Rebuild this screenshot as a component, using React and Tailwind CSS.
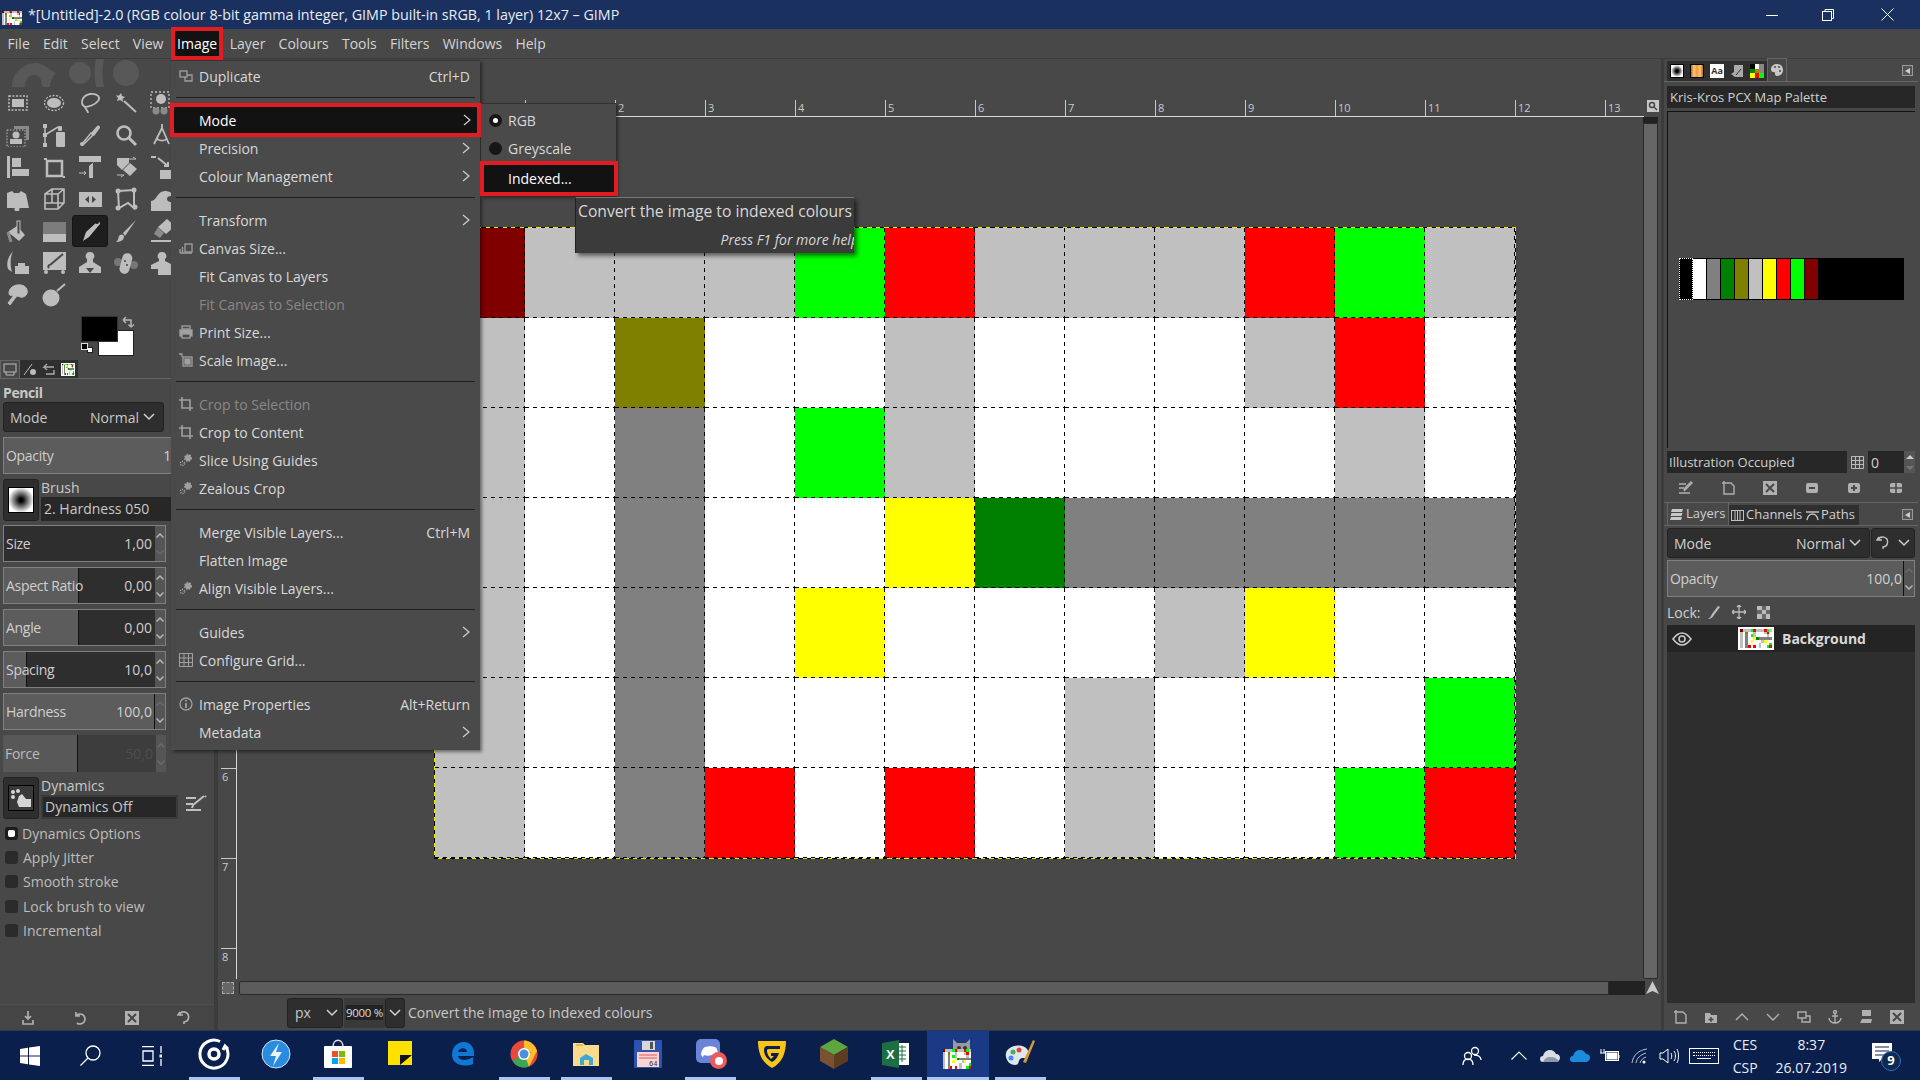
const C = '#bdbdbd'
const M = 'bg-[#800000]', S = 'bg-[#c0c0c0]', W = 'bg-white', O = 'bg-[#808000]', A = 'bg-[#808080]'
const L = 'bg-[#00ff00]', R = 'bg-[#ff0000]', Y = 'bg-[#ffff00]', G = 'bg-[#008000]'

const MAP = [
  [M, S, S, S, L, R, S, S, S, R, L, S],
  [S, W, O, W, W, S, W, W, W, S, R, W],
  [S, W, A, W, L, S, W, W, W, W, S, W],
  [S, W, A, W, W, Y, G, A, A, A, A, A],
  [S, W, A, W, Y, W, W, W, S, Y, W, W],
  [S, W, A, W, W, W, W, S, W, W, W, L],
  [S, W, A, R, W, R, W, S, W, W, L, R],
]

const TOOLS = [
  <><rect x="3" y="5" width="18" height="14" fill="none" stroke={C} strokeWidth="1.5" strokeDasharray="2 1.5" /><rect x="6" y="8" width="12" height="8" fill={C} /></>,
  <><ellipse cx="12" cy="12" rx="9.5" ry="7.5" fill="none" stroke={C} strokeWidth="1.3" strokeDasharray="2 1.5" /><ellipse cx="12" cy="12" rx="7" ry="5" fill={C} /></>,
  <path d="M7 16C2 13 3 5 12 3c7-1 11 3 8 7-3 4-10 6-13 6 0 2 3 3 3 6" fill="none" stroke={C} strokeWidth="1.8" />,
  <><path d="M7 2l1 3 3 1-2.500 2 .5 3-3-2-3 1 1-3-2-2.500h3z" fill={C} /><path d="M10 10l12 11" stroke={C} strokeWidth="2" /></>,
  <><rect x="1" y="1" width="18" height="16" fill="none" stroke={C} strokeWidth="1.300" strokeDasharray="2 2" /><circle cx="11" cy="8" r="5" fill={C} /><circle cx="6" cy="20" r="3.500" fill="#8a8a8a" /><circle cx="14" cy="20" r="3.500" fill="#8a8a8a" /></>,
  <><path d="M8 3h15v14h-3V6H8z" fill="#8a8a8a" /><rect x="1" y="7" width="18" height="17" fill="none" stroke={C} strokeDasharray="1.500 1.500" /><circle cx="10" cy="12" r="3.500" fill={C} /><rect x="4" y="16" width="12" height="5" fill={C} /></>,
  <><path d="M3 3v18M3 12L16 4" stroke={C} strokeWidth="1.500" fill="none" /><rect x="1" y="1" width="4" height="4" fill={C} /><rect x="1" y="10" width="4" height="4" fill={C} /><rect x="1" y="20" width="4" height="4" fill={C} /><rect x="14" y="9" width="9" height="15" rx="1" fill={C} /><rect x="16" y="3" width="4" height="5" rx="1" fill={C} /></>,
  <><path d="M4 21l9-11 2 2-10 10z" fill="none" stroke={C} strokeWidth="1.500" /><path d="M13 10l6-7c2-1 3 0 3 2l-6 8z" fill={C} /><circle cx="4" cy="21" r="2" fill={C} /></>,
  <><circle cx="10" cy="10" r="6.500" fill="none" stroke={C} strokeWidth="2.600" /><path d="M15 15l7 7" stroke={C} strokeWidth="3" /></>,
  <path d="M12 1v4M12 5L4 21M12 5l7 16M7 16c3 2 7 2 10 0" fill="none" stroke={C} strokeWidth="1.800" />,
  <><rect x="1" y="1" width="3" height="22" fill={C} /><rect x="6" y="3" width="9" height="9" fill={C} /><rect x="6" y="14" width="17" height="7" fill={C} /></>,
  <><path d="M5 6h15v15H5z" fill="none" stroke={C} strokeWidth="2.500" /><rect x="2" y="3" width="3" height="2" fill={C} /><rect x="21" y="21" width="2" height="2" fill={C} /></>,
  <><path d="M1 1h22v6h-8v16h-4V11l5-4H1z" fill={C} /><path d="M1 18h7l-2-2M8 18l-2 2" stroke={C} fill="none" /></>,
  <><path d="M3 3h12v5l-7 7-5-5z" fill={C} /><path d="M9 15l7-7 7 6-7 7z" fill={C} /><path d="M15 4h7l-3-2M3 20h7l-3 2" stroke={C} fill="none" /></>,
  <><path d="M1 2h5M8 3l10 8M18 7v4h-4" stroke={C} strokeWidth="2" fill="none" /><rect x="10" y="15" width="14" height="9" fill={C} /></>,
  <><path d="M1 6l5-2 2 2 5 0 2-2 5 3 3 14H1z" fill={C} /><circle cx="11" cy="22" r="2.500" fill={C} /></>,
  <path d="M3 7l7-5h12v14l-6 6H3zM3 7h13v15M16 7l6-5M10 2v14H3M10 16l12 0" fill="none" stroke={C} strokeWidth="1.600" />,
  <><rect x="1" y="5" width="23" height="15" fill={C} /><path d="M11 9l-4 3.500 4 3.500zM14 9l4 3.500-4 3.500z" fill="#484848" /></>,
  <><path d="M4 4l16-1 0 18-6-5-9 5z" fill="none" stroke={C} strokeWidth="2" /><circle cx="4" cy="4" r="2.500" fill={C} /><circle cx="20" cy="3" r="2.500" fill={C} /><circle cx="21" cy="20" r="2.500" fill={C} /><circle cx="4" cy="21" r="2.500" fill={C} /></>,
  <path d="M1 24V14c6 0 6-10 14-10 4 0 8 2 9 6-3-2-7-1-7 2 0 4 7 3 7 3v9z" fill={C} />,
  <><path d="M2 13l9-6 8 9-6 6z" fill={C} /><path d="M2 13l3 10" stroke="#8a8a8a" strokeWidth="3" /><rect x="11" y="2" width="3" height="13" fill="#484848" stroke={C} /></>,
  <><rect x="1" y="3" width="23" height="12" fill={C} opacity=".45" /><rect x="1" y="15" width="23" height="8" fill={C} /></>,
  <><path d="M5 22l3-9L19 3c2-1 3 0 3 2L11 18z" fill={C} /><circle cx="19" cy="3" r="2" fill="#1c1c1c" /></>,
  <><path d="M22 1L9 14l2 3z" fill={C} /><path d="M2 23c4 0 8-2 8-5 0-3-3-3-4-2-2 1-1 5-4 7z" fill={C} /></>,
  <><path d="M8 8l9-8 8 7-9 8z" fill={C} /><path d="M4 15l4-7 6 6-4 5z" fill="#8a8a8a" /><rect x="1" y="21" width="22" height="2" fill={C} /></>,
  <><path d="M7 0C2 6 0 12 2 18l4 3C4 14 4 6 7 0z" fill={C} /><path d="M12 12h7v3h4v8H9v-8h3z" fill={C} /></>,
  <><path d="M1 1h23v18H1z" fill={C} /><path d="M8 14L21 3M8 14c-2 0-2 2-1 3" stroke="#484848" strokeWidth="2" fill="none" /><circle cx="4" cy="21" r="2" fill={C} /><circle cx="21" cy="21" r="2" fill={C} /></>,
  <path d="M12 1a4 4 0 0 1 3 7v3l8 5v6H1v-6l8-5V8a4 4 0 0 1 3-7zM8 17l4 5 4-5z" fill={C} fillRule="evenodd" />,
  <><circle cx="4" cy="11" r="4" fill="#777" /><circle cx="20" cy="14" r="4" fill="#777" /><rect x="7" y="2" width="10" height="21" rx="5" transform="rotate(15 12 12)" fill={C} /><circle cx="11" cy="10" r="1" fill="#484848" /><circle cx="13" cy="14" r="1" fill="#484848" /></>,
  <><path d="M12 1a4 4 0 0 1 3 7v2l8 4v4H1v-4l8-4V8a4 4 0 0 1 3-7z" fill={C} /><rect x="8" y="16" width="16" height="8" fill={C} /></>,
  <path d="M3 10C3 3 12 0 18 3c5 3 4 10-1 11-3 1-5-2-7 0l-6 8-2-2 6-8C6 13 3 13 3 10zM10 8c3-2 7 0 6 3" fill={C} stroke={C} />,
  <><circle cx="9" cy="15" r="8.500" fill={C} /><path d="M15 8l8-7" stroke={C} strokeWidth="2" /></>,
]

const MENU = [
  { label: 'Duplicate', key: 'Ctrl+D', icon: 'dup' },
  'sep',
  { label: 'Mode', sub: true, hot: true },
  { label: 'Precision', sub: true },
  { label: 'Colour Management', sub: true },
  'sep',
  { label: 'Transform', sub: true },
  { label: 'Canvas Size...', icon: 'size' },
  { label: 'Fit Canvas to Layers' },
  { label: 'Fit Canvas to Selection', off: true },
  { label: 'Print Size...', icon: 'print' },
  { label: 'Scale Image...', icon: 'scale' },
  'sep',
  { label: 'Crop to Selection', off: true, icon: 'crop' },
  { label: 'Crop to Content', icon: 'crop' },
  { label: 'Slice Using Guides', icon: 'gear' },
  { label: 'Zealous Crop', icon: 'gear' },
  'sep',
  { label: 'Merge Visible Layers...', key: 'Ctrl+M' },
  { label: 'Flatten Image' },
  { label: 'Align Visible Layers...', icon: 'gear' },
  'sep',
  { label: 'Guides', sub: true },
  { label: 'Configure Grid...', icon: 'grid' },
  'sep',
  { label: 'Image Properties', key: 'Alt+Return', icon: 'info' },
  { label: 'Metadata', sub: true },
]

function MenuIcon({ name }) {
  const c = '#a0a0a0'
  return (
    <svg width="14" height="14" viewBox="0 0 14 14" fill="none" stroke={c} strokeWidth="1.300">
      {name === 'dup' && <><rect x="1" y="2" width="7" height="6" /><path d="M8 6h5v6H6V8" /></>}
      {name === 'size' && <><rect x="6" y="3" width="7" height="8" /><path d="M1 8v4M3.500 6v6M1 12h12" /></>}
      {name === 'print' && <><rect x="1" y="5" width="12" height="6" fill={c} /><rect x="3" y="1" width="8" height="3" /><rect x="3" y="9" width="8" height="4" fill="#4a4a4a" /></>}
      {name === 'scale' && <><rect x="4" y="4" width="9" height="9" /><rect x="6" y="6" width="5" height="5" fill={c} /><path d="M0 1h3v3" /></>}
      {name === 'crop' && <path d="M3 0v11h11M0 3h11v11" strokeWidth="1.600" />}
      {name === 'gear' && <><circle cx="9" cy="5" r="3" fill={c} strokeDasharray="1.500 1" strokeWidth="2" /><circle cx="3.500" cy="10.500" r="2" strokeDasharray="1 1" strokeWidth="1.600" /></>}
      {name === 'grid' && <path d="M.5.5h13v13H.5zM.5 5h13M.5 9.500h13M5 .5v13M9.500.5v13" strokeWidth="1" />}
      {name === 'info' && <><circle cx="7" cy="7" r="6" /><path d="M7 6v5M7 3v1.500" strokeWidth="1.800" /></>}
    </svg>
  )
}

function Chevron({ className = '' }) {
  return (
    <svg className={className} width="8" height="12" viewBox="0 0 8 12" fill="none" stroke="#d0d0d0" strokeWidth="1.200">
      <path d="M1 1l6 5-6 5" />
    </svg>
  )
}

function Caret({ className = '' }) {
  return (
    <svg className={className} width="12" height="8" viewBox="0 0 12 8" fill="none" stroke="#d0d0d0" strokeWidth="1.500">
      <path d="M1 1l5 5 5-5" />
    </svg>
  )
}

function ImageMenu() {
  return (
    <div className="absolute left-[171px] top-[60px] z-20 w-[309px] border-t border-[#333] bg-[#4a4a4a] pt-[1px] pb-[4px] text-[#d8d8d8] shadow-[2px_2px_3px_rgba(0,0,0,0.45)]">
      {MENU.map((m, i) => {
        if (m === 'sep') {
          return <div key={i} className="h-[16px] pt-[7px] pl-[5px] pr-[5px]"><div className="h-px bg-[#1f1f1f]" /></div>
        }
        return (
          <div
            key={i}
            className={m.hot
              ? 'relative z-10 -mx-px -my-[3px] flex h-[34px] items-center border-4 border-[#e31b23] bg-[#121212] pr-[6px] text-white'
              : 'flex h-[28px] items-center pr-[10px]'}
          >
            <div className={m.hot ? 'flex w-[25px] justify-center' : 'flex w-[28px] justify-center pl-[2px]'}>{m.icon ? <MenuIcon name={m.icon} /> : null}</div>
            <div className={m.off ? 'flex-1 text-[#888]' : 'flex-1'}>{m.label}</div>
            {m.key ? <div>{m.key}</div> : null}
            {m.sub ? <Chevron /> : null}
          </div>
        )
      })}
    </div>
  )
}

function ModeMenu() {
  return (
    <div className="absolute left-[481px] top-[103px] z-30 w-[135px] border-t border-[#333] bg-[#4a4a4a] pt-[2px] text-[#d8d8d8] shadow-[2px_2px_3px_rgba(0,0,0,0.45)]">
      <div className="flex h-[28px] items-center"><div className="ml-[8px] mr-[6px] flex h-[13px] w-[13px] items-center justify-center rounded-full bg-[#161616]"><div className="h-[5px] w-[5px] rounded-full bg-white" /></div>RGB</div>
      <div className="flex h-[28px] items-center"><div className="ml-[8px] mr-[6px] h-[13px] w-[13px] rounded-full bg-[#161616]" />Greyscale</div>
      <div className="-mx-px -mt-[1px] flex h-[35px] w-[138px] items-center border-4 border-[#e31b23] bg-[#121212] pl-[24px] text-white">Indexed...</div>
    </div>
  )
}

function Tip() {
  return (
    <div className="absolute left-[575px] top-[197px] z-40 h-[56px] w-[279px] overflow-hidden border-t border-[#777] border-l border-l-[#222] bg-[#3b3b3b] text-[#d8d8d8] shadow-[3px_3px_4px_rgba(0,0,0,0.5)]">
      <div className="pl-[2px] pt-[3px] text-[15.700px] leading-[21px] whitespace-nowrap">Convert the image to indexed colours</div>
      <div className="mt-[9px] flex justify-end whitespace-nowrap text-[14px] italic leading-[18px] -mr-[5px]">Press F1 for more help</div>
    </div>
  )
}

function Spinner({ dim }) {
  return (
    <div className="flex w-[10px] flex-col items-center justify-center gap-[4px] bg-[#555] h-full">
      <svg width="8" height="5" viewBox="0 0 8 5" fill="none" stroke={dim === 'up' || dim === 'both' ? '#6a6a6a' : '#b5b5b5'} strokeWidth="1.500"><path d="M.5 4.500L4 1l3.500 3.500" /></svg>
      <svg className="mt-[8px]" width="8" height="5" viewBox="0 0 8 5" fill="none" stroke={dim === 'down' || dim === 'both' ? '#6a6a6a' : '#b5b5b5'} strokeWidth="1.500"><path d="M.5.5L4 4 7.500.5" /></svg>
    </div>
  )
}

function Slider({ label, value, fill, dim, off }) {
  return (
    <div className={off
      ? 'relative flex h-[37px] w-[163px] items-center justify-between bg-[#3d3d3d] text-[#bbb]'
      : 'relative flex h-[37px] w-[163px] items-center justify-between border border-[#808080] bg-[#2e2e2e] text-[#cfcfcf]'}>
      <div className={`absolute inset-y-0 left-0 border-r border-[#111] ${off ? 'bg-[#585858]' : 'bg-[#5c5c5c]'} ${fill}`} />
      <div className="relative pl-[2px] text-[14px] tracking-[-0.3px]">{label}</div>
      <div className="relative flex h-full items-center gap-[3px]">
        <span className={off ? 'text-[#4d4d4d]' : ''}>{value}</span>
        <Spinner dim={dim} />
      </div>
    </div>
  )
}

function MiniMap({ className }) {
  return (
    <div className={`grid grid-cols-12 ${className}`}>
      {MAP.flat().map((c, i) => <div key={i} className={c} />)}
    </div>
  )
}

function LeftDock() {
  const opts = ['Apply Jitter', 'Smooth stroke', 'Lock brush to view', 'Incremental']
  return (
    <div className="flex w-[214px] shrink-0 flex-col bg-[#484848]">
      <div className="h-[28px] overflow-hidden pl-[12px]">
        <svg width="150" height="28" viewBox="0 0 150 28" fill="#585858"><path d="M0 28c0-16 14-24 24-24 8 0 14 8 20 10-4 4-6 9-6 14h-8c0-8-3-12-8-12s-9 4-9 12z" /><circle cx="68" cy="14" r="11" /><circle cx="114" cy="14" r="13" /><path d="M84 0c-2 10-2 18 0 28h8c-2-10-2-18 0-28z" /></svg>
      </div>
      <div className="grid w-[180px] grid-cols-[repeat(5,36px)] auto-rows-[32px]">
        {TOOLS.map((t, i) => (
          <div key={i} className={i === 22 ? 'flex items-center justify-center rounded-[3px] border border-[#151515] bg-[#1e1e1e]' : 'flex items-center justify-center'}>
            <svg width="24" height="24" viewBox="0 0 24 24">{t}</svg>
          </div>
        ))}
      </div>
      <div className="relative h-[50px] shrink-0">
        <div className="absolute left-[98px] top-[19px] h-[26px] w-[36px] border border-[#222] bg-white" />
        <div className="absolute left-[81px] top-[5px] h-[26px] w-[37px] border border-[#333] bg-black" />
        <svg className="absolute left-[122px] top-[5px]" width="13" height="13" viewBox="0 0 13 13" fill="none" stroke="#b5b5b5" strokeWidth="1.500"><path d="M1 4h8v7M1 4l3-3M1 4l3 3M9 11l-2.500-2.500M9 11l3-2.500" /></svg>
        <div className="absolute left-[87px] top-[36px] h-[6px] w-[6px] border border-[#222] bg-white" />
        <div className="absolute left-[81px] top-[32px] h-[7px] w-[7px] border border-[#ddd] bg-black" />
      </div>
      <div className="flex h-[18px] shrink-0 items-end border-b border-[#666]">
        <div className="flex h-[18px] w-[20px] items-center justify-center border border-b-0 border-[#666]"><svg width="14" height="13" viewBox="0 0 14 13" fill="none" stroke="#bbb"><rect x="1" y="1" width="12" height="8" /><path d="M3 12h8M3 9v3M11 9v3" /></svg></div>
        <div className="flex h-[18px] w-[19px] items-center justify-center bg-[#2f2f2f]"><svg width="14" height="13" viewBox="0 0 14 13" fill="#bbb"><circle cx="10" cy="9" r="3" /><path d="M1 12L9 1" stroke="#bbb" /></svg></div>
        <div className="flex h-[18px] w-[19px] items-center justify-center bg-[#2f2f2f]"><svg width="14" height="13" viewBox="0 0 14 13" fill="none" stroke="#aaa" strokeWidth="1.400"><path d="M12 4H2l3-3M2 4l3 3M4 11h8V7" /></svg></div>
        <div className="flex h-[18px] w-[20px] items-center justify-center bg-[#2f2f2f]"><MiniMap className="h-[13px] w-[14px] border border-white" /></div>
      </div>
      <div className="flex h-[23px] shrink-0 items-center pl-[3px] pt-[4px] text-[14px] font-bold text-[#c8c8c8] tracking-[-0.4px]">Pencil</div>
      <div className="flex flex-col px-[3px]">
        <div className="flex h-[30px] w-[161px] items-center rounded-[3px] border border-[#222] bg-[#2e2e2e] pl-[6px] pr-[8px] text-[#c8c8c8]">
          <span className="flex-1">Mode</span><span className="mr-[4px]">Normal</span><Caret />
        </div>
        <div className="mt-[5px] flex h-[37px] w-[205px] items-center justify-between border border-[#808080] bg-[#5c5c5c] text-[#cfcfcf]">
          <span className="pl-[2px] tracking-[-0.3px]">Opacity</span><span className="pr-[8px]">100,0</span>
        </div>
        <div className="mt-[5px] flex h-[42px]">
          <div className="flex h-[42px] w-[36px] shrink-0 items-center justify-center rounded-[3px] border border-[#222] bg-[#2e2e2e]">
            <div className="h-[26px] w-[26px] border border-black bg-[radial-gradient(circle,#000_10%,#fff_75%)]" />
          </div>
          <div className="ml-[2px] flex flex-col text-[#c8c8c8]">
            <div className="h-[18px] leading-[18px]">Brush</div>
            <div className="h-[24px] w-[180px] bg-[#272727] pl-[3px] leading-[24px]">2. Hardness 050</div>
          </div>
        </div>
        <div className="mt-[4px] flex flex-col gap-[5px]">
          <Slider label="Size" value="1,00" fill="w-0 border-r-0" dim="down" />
          <Slider label="Aspect Ratio" value="0,00" fill="w-[75px]" />
          <Slider label="Angle" value="0,00" fill="w-[75px]" />
          <Slider label="Spacing" value="10,0" fill="w-[23px]" />
          <Slider label="Hardness" value="100,0" fill="w-[151px]" dim="up" />
          <Slider label="Force" value="50,0" fill="w-[75px]" dim="both" off />
        </div>
        <div className="mt-[5px] flex h-[42px]">
          <div className="flex h-[42px] w-[36px] shrink-0 items-center justify-center rounded-[3px] border border-[#222] bg-[#2e2e2e]">
            <div className="flex h-[26px] w-[26px] items-center justify-center border border-black bg-[#3a3a3a]">
              <svg width="22" height="20" viewBox="0 0 22 20" fill="#d5d5d5"><circle cx="3" cy="4" r="2" /><circle cx="8" cy="3" r="2" /><circle cx="3" cy="9" r="2" /><path d="M9 8l3-2 4 5h5v8H9l-2-5z" /></svg>
            </div>
          </div>
          <div className="ml-[2px] flex flex-col text-[#c8c8c8]">
            <div className="h-[18px] leading-[18px]">Dynamics</div>
            <div className="h-[24px] w-[137px] border-2 border-[#3a3a3a] bg-[#272727] pl-[2px] leading-[20px]">Dynamics Off</div>
          </div>
          <svg className="ml-[8px] mt-[18px]" width="21" height="20" viewBox="0 0 21 20" fill="none" stroke="#c0c0c0" strokeWidth="2"><path d="M0 3h10M0 9h7M0 15h15M6 13l1-3L18 1M19 1l1 1" /></svg>
        </div>
        <div className="mt-[2px] flex flex-col text-[#bdbdbd]">
          <div className="flex h-[24px] items-center gap-[4px] pl-[2px]">
            <div className="flex h-[13px] w-[13px] items-center justify-center rounded-[3px] bg-[#1c1c1c]"><div className="h-[7px] w-[7px] rounded-[2px] bg-white" /></div>
            Dynamics Options
          </div>
          {opts.map((o) => (
            <div key={o} className="flex h-[24.500px] items-center gap-[5px] pl-[2px]">
              <div className="h-[13px] w-[13px] rounded-[3px] bg-[#2a2a2a]" />{o}
            </div>
          ))}
        </div>
      </div>
      <div className="flex-1" />
      <div className="flex h-[26px] shrink-0 items-center border-t border-[#4f4f4f] bg-[#454545]">
        {['save', 'undo', 'del', 'reset'].map((k) => (
          <div key={k} className="flex w-[52px] justify-center pl-[4px]">
            <svg width="14" height="14" viewBox="0 0 14 14" fill="none" stroke="#b0b0b0" strokeWidth="1.700">
              {k === 'save' && <path d="M7 0v8M4 5l3 3 3-3M2 9v4h10V9" />}
              {k === 'undo' && <path d="M3 1v4h4M3 5a5 5 0 1 1 1 7" />}
              {k === 'del' && <><rect x="0" y="0" width="14" height="14" fill="#b0b0b0" stroke="none" /><path d="M3 3l8 8M11 3l-8 8" stroke="#454545" strokeWidth="2" /></>}
              {k === 'reset' && <path d="M3 1L1 4h5M2 4a5 5 0 1 1 5 7v2" />}
            </svg>
          </div>
        ))}
      </div>
    </div>
  )
}

// dashed grid lines on the right and bottom edge of every cell, 4px on and 4px off
const CELL_LINES = "bg-[image:linear-gradient(90deg,#000_50%,transparent_50%),linear-gradient(#000_50%,transparent_50%)] bg-[length:8px_1px,1px_8px] bg-[position:0_100%,100%_0] [background-repeat:repeat-x,repeat-y]"

function Canvas() {
  const topTicks = [-2, -1, 0, 1, 2, 3, 4, 5, 6, 7, 8, 9, 10, 11, 12, 13]
  const sideTicks = [-1, 0, 1, 2, 3, 4, 5, 6, 7, 8]
  return (
    <div className="flex min-w-0 flex-1 flex-col border-l-[4px] border-r-[3px] border-[#3c3c3c] bg-[#484848]">
      <div className="h-[37px] shrink-0" />
      <div className="flex h-[21px] shrink-0">
        <div className="w-[19px] shrink-0" />
        <div className="flex flex-1 overflow-hidden border-b border-[#d8d8d8] pl-[18px] text-[11px] leading-[18px] text-[#c8c8c8]">
          {topTicks.map((t) => (
            <div key={t} className="h-[16px] mt-[4px] w-[90px] shrink-0 border-l border-[#c8c8c8] pl-[2px] leading-[15px]">{t}</div>
          ))}
        </div>
        <div className="flex w-[17px] shrink-0 items-center justify-center pb-[2px]">
          <div className="flex h-[12px] w-[12px] items-center justify-center bg-[#c8c8c8]">
            <svg width="10" height="10" viewBox="0 0 10 10" fill="none" stroke="#484848" strokeWidth="1.500"><circle cx="4" cy="4" r="2.500" /><path d="M6 6l3 3" /></svg>
          </div>
        </div>
      </div>
      <div className="flex min-h-0 flex-1">
        <div className="w-[19px] shrink-0 overflow-hidden border-r border-[#d8d8d8] pt-[21px] pb-[5px] text-[11px] leading-[15px] text-[#c8c8c8]">
          {sideTicks.map((t) => (
            <div key={t} className="ml-[3px] h-[90px] border-t border-[#c8c8c8] pl-[1px]">{t}</div>
          ))}
        </div>
        <div className="min-w-0 flex-1 overflow-hidden pl-[197px] pt-[110px]">
          <div className="w-[1082px] bg-[repeating-linear-gradient(45deg,#000_0_3px,#e8e800_3px_6px)] p-px">
            <div className="grid w-[1080px] grid-cols-[repeat(12,90px)] auto-rows-[90px]">
              {MAP.flat().map((c, i) => (
                <div key={i} className={`${c} ${CELL_LINES}`} />
              ))}
            </div>
          </div>
        </div>
        <div className="flex w-[15px] shrink-0 flex-col">
          <div className="h-[6px] bg-[#222]" />
          <div className="mx-[0px] flex-1 rounded-b-[2px] border border-[#2a2a2a] bg-[#666]" />
        </div>
        <div className="w-[3px] shrink-0" />
      </div>
      <div className="flex h-[14px] shrink-0 items-center mt-[2px]">
        <div className="ml-[4px] h-[12px] w-[12px] border border-dashed border-[#aaa] bg-[#666]" />
        <div className="ml-[5px] h-[14px] w-[1370px] rounded-l-[2px] border border-[#2a2a2a] bg-[#5c5c5c]" />
        <div className="h-[14px] w-[36px] bg-[#222]" />
        <svg className="ml-[1px]" width="13" height="14" viewBox="0 0 13 14" fill="#c8c8c8"><path d="M6.500 0L13 13 6.500 10 0 13z" /></svg>
      </div>
      <div className="flex h-[35px] shrink-0 items-center pl-[69px] text-[#c8c8c8]">
        <div className="flex h-[30px] w-[56px] items-center justify-between rounded-[3px] border border-[#222] bg-[#2e2e2e] pl-[7px] pr-[4px]">px <Caret /></div>
        <div className="ml-[1px] flex h-[30px] w-[41px] items-center justify-center bg-[#3a3a3a]"><span className="whitespace-nowrap bg-[#222] text-[11.500px] leading-[15px] tracking-[-0.3px] text-[#ddd]">9000 %</span></div>
        <div className="flex h-[30px] w-[20px] items-center justify-center rounded-[3px] border border-[#222] bg-[#2e2e2e]"><Caret /></div>
        <div className="ml-[3px]">Convert the image to indexed colours</div>
      </div>
    </div>
  )
}

const PALETTE = ['bg-black', 'bg-white', 'bg-[#808080]', 'bg-[#008000]', 'bg-[#808000]', 'bg-[#c0c0c0]', 'bg-[#ffff00]', 'bg-[#ff0000]', 'bg-[#00ff00]', 'bg-[#800000]']

function RightDock() {
  const paletteBtns = ['edit', 'new', 'del', 'minus', 'plus', 'grid']
  const layerBtns = ['new', 'group', 'up', 'down', 'dup', 'anchor', 'merge', 'del']
  const btn = (k) => (
    <svg width="14" height="14" viewBox="0 0 14 14" fill="none" stroke="#b0b0b0" strokeWidth="1.400">
      {k === 'edit' && <path d="M0 3h7M0 7h5M0 12h11M5 10l1-3 6-6 1 1-6 6z" />}
      {k === 'new' && <path d="M3 2h7l3 3v8H3zM3 2V0M1 2h4" />}
      {k === 'del' && <><rect width="14" height="14" fill="#b0b0b0" stroke="none" /><path d="M3 3l8 8M11 3l-8 8" stroke="#484848" strokeWidth="2" /></>}
      {k === 'minus' && <><rect x="1" y="2" width="12" height="10" rx="2" fill="#b0b0b0" stroke="none" /><path d="M4 7h6" stroke="#484848" strokeWidth="2" /></>}
      {k === 'plus' && <><rect x="1" y="2" width="12" height="10" rx="2" fill="#b0b0b0" stroke="none" /><path d="M4 7h6M7 4v6" stroke="#484848" strokeWidth="2" /></>}
      {k === 'grid' && <><rect x="1" y="2" width="12" height="10" rx="2" fill="#b0b0b0" stroke="none" /><path d="M7 2v10M1 7h12" stroke="#484848" strokeWidth="1.500" /></>}
      {k === 'group' && <><path d="M1 3h5l1 2h6v8H1z" fill="#b0b0b0" stroke="none" /><path d="M7 7v5M4.500 9.500h5" stroke="#484848" strokeWidth="1.500" /></>}
      {k === 'up' && <path d="M1 10l6-6 6 6" />}
      {k === 'down' && <path d="M1 4l6 6 6-6" />}
      {k === 'dup' && <><rect x="1" y="2" width="8" height="6" /><path d="M9 6h4v6H5V8" /></>}
      {k === 'anchor' && <><circle cx="7" cy="2" r="1.500" /><path d="M7 4v9M1 8c0 3 3 5 6 5s6-2 6-5M4 6h6" /></>}
      {k === 'merge' && <><rect x="3" y="0" width="9" height="6" fill="#b0b0b0" stroke="none" /><path d="M1 13l2-4h10l-1 4z" fill="#b0b0b0" stroke="none" /></>}
    </svg>
  )
  const Arrow = () => (
    <div className="flex h-[11px] w-[11px] items-center justify-center border border-[#999] bg-[#555]"><div className="h-0 w-0 border-y-[3px] border-r-[5px] border-y-transparent border-r-[#ccc]" /></div>
  )
  return (
    <div className="flex w-[256px] shrink-0 flex-col bg-[#484848] pr-[2px] text-[#d0d0d0]">
      <div className="flex h-[23px] shrink-0 items-end border-b border-[#666] pl-[3px] pr-[3px]">
        {['bg-[radial-gradient(circle,#000_15%,#fff_70%)]', 'bg-[linear-gradient(90deg,#b56a1d,#ffc777,#e89a3c,#ffc777,#b56a1d)]'].map((b) => (
          <div key={b} className="flex h-[20px] w-[20px] items-center justify-center bg-[#2f2f2f]"><div className={`h-[14px] w-[14px] border border-black ${b}`} /></div>
        ))}
        <div className="flex h-[20px] w-[20px] items-center justify-center bg-[#2f2f2f]"><div className="h-[14px] w-[14px] bg-white text-center text-[9px] font-bold leading-[14px] text-[#333]">Aa</div></div>
        <div className="flex h-[20px] w-[20px] items-center justify-center bg-[#2f2f2f]"><svg width="14" height="14" viewBox="0 0 14 14"><path d="M4 1h9v12H5l-4-3 3-2z" fill="#aaa" /><path d="M6 11l5-6" stroke="#333" /></svg></div>
        <div className="flex h-[20px] w-[20px] items-center justify-center bg-[#2f2f2f]"><div className="grid h-[14px] w-[14px] grid-cols-3"><i className="bg-black" /><i className="bg-white" /><i className="bg-[#888]" /><i className="bg-[#080]" /><i className="bg-[#a80]" /><i className="bg-[#888]" /><i className="bg-[#ff0]" /><i className="bg-[#f00]" /><i className="bg-[#0f0]" /></div></div>
        <div className="flex h-[23px] w-[20px] items-center justify-center border border-b-0 border-[#666]"><svg width="14" height="14" viewBox="0 0 14 14"><path d="M7 1c4 0 6 3 6 6 0 4-3 6-6 6-2 0-2-2-2-3s-1-1-2-1-2-1-2-3c0-3 3-5 6-5z" fill="#c8c8c8" /><circle cx="5" cy="4" r="1" fill="#484848" /><circle cx="9" cy="4" r="1" fill="#484848" /><circle cx="10" cy="8" r="1" fill="#484848" /></svg></div>
        <div className="flex-1" />
        <div className="mb-[5px] mr-[2px]"><Arrow /></div>
      </div>
      <div className="mx-[3px] mt-[4px] h-[22px] shrink-0 bg-[#272727] pl-[3px] text-[13px] leading-[22px]">Kris-Kros PCX Map Palette</div>
      <div className="mx-[3px] mt-[3px] h-[337px] shrink-0 border-t border-l border-[#111] pl-[11px] pt-[146px]">
        <div className="flex h-[42px] w-[225px] bg-black">
          {PALETTE.map((p, i) => (
            <div key={i} className={`h-full w-[14px] ${p} border-y border-r border-black ${i === 0 ? 'outline-1 outline-dotted -outline-offset-1 outline-white' : ''}`} />
          ))}
        </div>
      </div>
      <div className="mt-[3px] flex h-[22px] shrink-0 items-center px-[3px]">
        <div className="h-[22px] w-[180px] bg-[#272727] pl-[2px] text-[13px] leading-[22px]">Illustration Occupied</div>
        <svg className="ml-[4px]" width="13" height="13" viewBox="0 0 13 13" fill="none" stroke="#bbb"><path d="M.5.5h12v12H.5zM.5 4.500h12M.5 8.500h12M4.500.5v12M8.500.5v12" /></svg>
        <div className="ml-[4px] flex h-[22px] flex-1 items-center justify-between bg-[#272727] pl-[3px]">0<div className="flex h-full w-[11px] flex-col items-center justify-around bg-[#555]"><div className="h-0 w-0 border-x-[4px] border-b-[4px] border-x-transparent border-b-[#ccc]" /><div className="h-0 w-0 border-x-[4px] border-t-[4px] border-x-transparent border-t-[#777]" /></div></div>
      </div>
      <div className="flex h-[30px] shrink-0 items-center border-b border-[#666] pl-[1px]">
        {paletteBtns.map((k) => <div key={k} className="flex w-[42px] justify-center">{btn(k)}</div>)}
      </div>
      <div className="flex h-[23px] shrink-0 items-end border-b border-[#666] pl-[3px] pr-[3px] text-[13px]">
        <div className="flex h-[23px] w-[62px] items-center gap-[2px] border border-b-0 border-[#666] pl-[2px]"><svg width="14" height="14" viewBox="0 0 14 14" fill="#c8c8c8"><path d="M2 2h11l-1 3H1zM1.500 6h11l-1 3H.5zM1 10h11l-1 3H0z" /></svg>Layers</div>
        <div className="flex h-[20px] w-[76px] items-center gap-[2px] bg-[#2f2f2f] pl-[2px]"><svg width="13" height="13" viewBox="0 0 13 13" fill="none" stroke="#c0c0c0"><rect x=".5" y="1.500" width="12" height="10" /><path d="M4 1.500v10M6.500 1.500v10M9 1.500v10" /></svg>Channels</div>
        <div className="flex h-[20px] w-[54px] items-center gap-[2px] bg-[#2f2f2f] pl-[1px]"><svg width="13" height="11" viewBox="0 0 13 11" fill="none" stroke="#c0c0c0" strokeWidth="1.400"><path d="M0 2h13M1 10c1-5 3-6 5.500-6S11 5 12 10" /></svg>Paths</div>
        <div className="flex-1" />
        <div className="mb-[5px] mr-[2px]"><Arrow /></div>
      </div>
      <div className="mx-[3px] mt-[2px] flex h-[30px] shrink-0 gap-[1px]">
        <div className="flex flex-1 items-center rounded-[3px] border border-[#222] bg-[#2e2e2e] pl-[6px] pr-[8px]"><span className="flex-1">Mode</span><span className="mr-[4px]">Normal</span><Caret /></div>
        <div className="flex w-[44px] items-center justify-between rounded-[3px] border border-[#222] bg-[#2e2e2e] px-[4px]"><svg width="13" height="14" viewBox="0 0 13 14" fill="none" stroke="#c0c0c0" strokeWidth="1.400"><path d="M3 1L1 4h5M2 4a5 5 0 1 1 5 7v2" /></svg><Caret /></div>
      </div>
      <div className="mx-[3px] mt-[2px] flex h-[37px] shrink-0 items-center justify-between border border-[#808080] bg-[#5c5c5c]">
        <span className="pl-[2px] tracking-[-0.3px]">Opacity</span>
        <div className="flex h-full items-center gap-[1px]"><span>100,0</span><div className="border-l border-[#111] h-full"><Spinner dim="up" /></div></div>
      </div>
      <div className="mx-[3px] mt-[4px] flex h-[22px] shrink-0 items-center gap-[8px]">
        Lock:
        <svg width="13" height="13" viewBox="0 0 13 13" fill="#bbb"><path d="M0 13c2-1 3-3 4-5l6-8 2 1-6 8c-1 2-3 4-6 4z" /></svg>
        <svg className="ml-[3px]" width="14" height="14" viewBox="0 0 14 14" fill="none" stroke="#bbb" strokeWidth="1.300"><path d="M7 0v14M0 7h14M5 2l2-2 2 2M5 12l2 2 2-2M2 5L0 7l2 2M12 5l2 2-2 2" /></svg>
        <div className="ml-[3px] grid h-[13px] w-[13px] grid-cols-3 bg-[#666]"><i className="bg-[#bbb]" /><i /><i className="bg-[#bbb]" /><i /><i className="bg-[#bbb]" /><i /><i className="bg-[#bbb]" /><i /><i className="bg-[#bbb]" /></div>
      </div>
      <div className="mx-[3px] mt-[2px] flex min-h-0 flex-1 flex-col bg-[#2e2e2e]">
        <div className="flex h-[27px] shrink-0 items-center bg-[#242424]">
          <svg className="ml-[5px]" width="20" height="14" viewBox="0 0 20 14" fill="none" stroke="#c8c8c8" strokeWidth="1.600"><path d="M1 7c3-4 6-6 9-6s6 2 9 6c-3 4-6 6-9 6s-6-2-9-6z" /><circle cx="10" cy="7" r="3" /></svg>
          <div className="ml-[46px] flex h-[23px] w-[36px] items-center justify-center bg-white p-[2px]"><MiniMap className="h-full w-full" /></div>
          <div className="ml-[8px] font-bold text-[#d8d8d8]">Background</div>
        </div>
      </div>
      <div className="flex h-[27px] shrink-0 items-center">
        {layerBtns.map((k) => <div key={k} className="flex w-[31px] justify-center">{btn(k)}</div>)}
      </div>
    </div>
  )
}

function Slot({ on, active, children }) {
  return (
    <div className={active ? 'flex h-full w-[62px] flex-col items-center bg-[#1a3a86]' : 'flex h-full w-[62px] flex-col items-center'}>
      <div className="flex flex-1 items-center justify-center">{children}</div>
      <div className={on ? (active ? 'h-[3px] w-[62px] bg-[#a9c4f5]' : 'h-[3px] w-[51px] bg-[#a9c4f5]') : 'h-[3px]'} />
    </div>
  )
}

function Taskbar() {
  return (
    <div className="flex h-[50px] shrink-0 items-stretch border-t border-[#2a3a55] bg-[#0a1f4b] text-[14px] text-white">
      <div className="flex h-full w-[60px] items-center justify-center">
        <svg width="20" height="20" viewBox="0 0 20 20" fill="#fff"><path d="M0 3l8-1.200V9.500H0zM9 1.600L20 0v9.500H9zM0 10.500h8v7.700L0 17zM9 10.500h11V20L9 18.400z" /></svg>
      </div>
      <div className="flex h-full w-[60px] items-center justify-center">
        <svg width="21" height="21" viewBox="0 0 21 21" fill="none" stroke="#fff" strokeWidth="1.300"><circle cx="13" cy="8" r="7" /><path d="M8 13l-7.500 7.500" /></svg>
      </div>
      <div className="flex h-full w-[63px] items-center justify-center">
        <svg width="20" height="20" viewBox="0 0 20 20" fill="none" stroke="#fff" strokeWidth="1.300"><path d="M0 .5h12M0 19.500h12M1 5h10v10H1zM19 0v7M19 13v7" /><rect x="17.500" y="8.500" width="3" height="3" fill="#fff" stroke="none" /></svg>
      </div>
      <Slot on>
        <svg width="32" height="32" viewBox="0 0 32 32" fill="none" stroke="#fff"><path d="M28 9a14 14 0 1 1-6-5.500M30 11l-3-3-2 4" strokeWidth="3" /><circle cx="16" cy="16" r="5" strokeWidth="3.500" /></svg>
      </Slot>
      <Slot>
        <svg width="30" height="30" viewBox="0 0 30 30"><circle cx="15" cy="15" r="14" fill="#2a8ce0" stroke="#cfe4fa" /><path d="M18 4L9 17h6l-3 10 9-14h-6z" fill="#e9f4ff" /></svg>
      </Slot>
      <Slot on>
        <svg width="30" height="30" viewBox="0 0 30 30"><path d="M10 8c0-9 10-9 10 0" fill="none" stroke="#ddd" strokeWidth="1.500" /><rect x="1" y="7" width="28" height="22" rx="1" fill="#fff" /><rect x="9" y="12" width="6" height="6" fill="#f25022" /><rect x="16" y="12" width="6" height="6" fill="#7fba00" /><rect x="9" y="19" width="6" height="6" fill="#00a4ef" /><rect x="16" y="19" width="6" height="6" fill="#ffb900" /></svg>
      </Slot>
      <Slot>
        <svg width="24" height="26" viewBox="0 0 24 26"><rect width="24" height="24" fill="#ffe100" /><path d="M12 24V14h12z" fill="#111" transform="translate(0 0)" /></svg>
      </Slot>
      <Slot>
        <svg width="26" height="28" viewBox="0 0 26 28"><path d="M3 15C3 6 9 2 15 2c6 0 10 5 10 11v3H9c1 5 9 5 15 1v7c-10 4-21 0-21-9zm6-3h9c0-5-8-5-9 0z" fill="#0f78d4" /></svg>
      </Slot>
      <Slot on>
        <svg width="28" height="28" viewBox="0 0 28 28"><circle cx="14" cy="14" r="13.500" fill="#e74a3c" /><path d="M14 14L2.500 21A13.500 13.500 0 0 0 19 26.500z" fill="#34a853" /><path d="M14 .5A13.500 13.500 0 0 1 27 12H14z" fill="#fbc02d" /><path d="M27 11l-8 15.500L14 14z" fill="#fbc02d" /><circle cx="14" cy="14" r="6" fill="#fff" /><circle cx="14" cy="14" r="4.500" fill="#4a90e2" /></svg>
      </Slot>
      <Slot on>
        <svg width="28" height="26" viewBox="0 0 28 26"><path d="M1 2h10l2 2h14v21H1z" fill="#f8dc8b" /><rect x="4" y="3" width="7" height="2" fill="#e5b94b" /><path d="M8 24v-7l6-4 7 4v7h-4v-5h-5v5z" fill="#3ba8d8" /></svg>
      </Slot>
      <Slot>
        <svg width="28" height="28" viewBox="0 0 28 28"><rect width="28" height="28" rx="1" fill="#2d52b0" /><rect x="8" y="1" width="13" height="9" fill="#d8d8d8" /><rect x="16" y="2" width="3" height="7" fill="#555" /><rect x="3" y="12" width="22" height="15" fill="#fbd3d3" /><path d="M5 15h18M5 18h18" stroke="#d85a5a" /><text x="15" y="26" fontSize="7" fill="#333" fontFamily="Liberation Mono, monospace">64</text></svg>
      </Slot>
      <Slot on>
        <div className="relative h-[30px] w-[28px]">
          <svg width="28" height="30" viewBox="0 0 28 30"><rect y="0" width="24" height="24" rx="5" fill="#6c84d8" /><path d="M5 15c1-4 2-6 4-7 4-1 6-1 10 0 2 1 3 4 3 8-3 2-5 2-5 2l-1-2c-3 1-6 1-8 0l-1 2s-1 0-2-3z" fill="#fff" /></svg>
          <div className="absolute right-[-3px] bottom-[0px] flex h-[17px] w-[17px] items-center justify-center rounded-full bg-[#ec5a5a]"><div className="h-[8px] w-[8px] rounded-full bg-white" /></div>
        </div>
      </Slot>
      <Slot>
        <svg width="28" height="28" viewBox="0 0 28 28"><path d="M0 1h28c0 12-4 22-14 27C4 23 0 13 0 1z" fill="#f9c51b" /><path d="M22 6H9c-2 0-3 2-3 4 0 5 3 9 8 12 4-2 6-6 7-9h-8v3h3c-1 1-2 2-3 3-2-2-4-5-4-8 0-1 0-2 2-2h11z" fill="#0a1f4b" /></svg>
      </Slot>
      <Slot>
        <svg width="28" height="30" viewBox="0 0 28 30"><path d="M14 0l14 8-14 8L0 8z" fill="#5da53c" /><path d="M0 8l14 8v14L0 22z" fill="#7a5230" /><path d="M28 8L14 16v14l14-8z" fill="#5e3c20" /></svg>
      </Slot>
      <Slot on>
        <svg width="28" height="28" viewBox="0 0 28 28"><rect x="13" y="3" width="14" height="22" fill="#fff" /><path d="M16 7h8M16 11h8M16 15h8M16 19h8M20 5v17" stroke="#1d6f42" /><path d="M0 3l17-3v28L0 25z" fill="#1d6f42" /><text x="4" y="19" fontSize="13" fontWeight="700" fill="#fff" fontFamily="Liberation Sans, sans-serif">X</text></svg>
      </Slot>
      <Slot on active>
        <div className="relative h-[30px] w-[30px]">
          <svg className="absolute left-[8px] top-0" width="22" height="20" viewBox="0 0 22 20"><path d="M2 0l4 4h9l4-4v18H2z" fill="#9a9a9a" /><circle cx="8" cy="9" r="2" fill="#334" /><circle cx="14" cy="9" r="2" fill="#334" /></svg>
          <MiniMap className="absolute bottom-0 left-0 h-[20px] w-[28px] bg-white" />
        </div>
      </Slot>
      <Slot on>
        <svg width="32" height="30" viewBox="0 0 32 30"><path d="M2 18C0 10 10 5 18 7c7 2 8 8 5 11-3 2-5 0-7 2-2 3-1 6-5 6-4 0-8-3-9-8z" fill="#dfe7ee" /><circle cx="9" cy="13" r="2.500" fill="#3fb54a" /><circle cx="15" cy="11" r="2.500" fill="#e8413c" /><circle cx="7" cy="19" r="2.500" fill="#4285f4" /><path d="M29 1l2 1-9 22-3-1z" fill="#d59a3a" /></svg>
      </Slot>
      <div className="flex-1" />
      <div className="flex h-full items-center">
        <svg className="mr-[29px]" width="20" height="20" viewBox="0 0 20 20" fill="none" stroke="#fff" strokeWidth="1.300"><circle cx="13" cy="5" r="3.500" /><circle cx="6" cy="10" r="3.500" /><path d="M1 19c0-4 2-6 5-6s5 2 5 6M12 9c4 0 7 2 7 5" /></svg>
        <svg className="mr-[13px]" width="16" height="9" viewBox="0 0 16 9" fill="none" stroke="#fff" strokeWidth="1.200"><path d="M.5 8.500L8 1l7.500 7.500" /></svg>
        <svg className="mr-[10px]" width="20" height="13" viewBox="0 0 20 13"><path d="M3 13a3 3 0 0 1 0-6c1-4 4-6 7-6s5 2 6 4c3 0 4 2 4 4s-2 4-4 4z" fill="#d8dde6" /><path d="M3 13c2-4 4-5 8-5 4 0 6 2 8 4-1 1-2 1-3 1z" fill="#8e97a8" /></svg>
        <svg className="mr-[10px]" width="20" height="13" viewBox="0 0 20 13"><path d="M3 13a3 3 0 0 1 0-6c1-4 4-6 7-6s5 2 6 4c3 0 4 2 4 4s-2 4-4 4z" fill="#1b8be0" /></svg>
        <svg className="mr-[10px]" width="20" height="14" viewBox="0 0 20 14" fill="none" stroke="#fff"><rect x="5.500" y="2.500" width="13" height="9" /><rect x="7" y="4" width="10" height="6" fill="#fff" /><path d="M19 6v3M1 0v4M4 0v4M0 4h5" /></svg>
        <svg className="ml-[1px] mr-[10px]" width="18" height="16" viewBox="0 0 18 16" fill="none" stroke="#b9c2d2"><path d="M1 15C2 7 8 2 16 1M5 15c1-5 4-8 10-10M9 15c1-3 3-5 6-6" /><circle cx="13" cy="14" r="1.500" fill="#fff" stroke="none" /></svg>
        <svg className="mr-[10px]" width="20" height="16" viewBox="0 0 20 16" fill="none" stroke="#fff"><path d="M1 5h3l5-4v14l-5-4H1zM12 5c1 2 1 4 0 6M15 3c2 3 2 7 0 10M18 1c2 4 2 10 0 14" /></svg>
        <div className="mr-[14px] flex h-[16px] w-[30px] flex-col items-center justify-center gap-[2px] border border-white">
          <div className="h-px w-[22px] border-t border-dotted border-white" /><div className="h-px w-[22px] border-t border-dotted border-white" /><div className="h-px w-[14px] bg-white" />
        </div>
        <div className="flex flex-col items-center leading-[23px] text-[#e8edf5]"><span>CES</span><span>CSP</span></div>
        <div className="ml-[18px] mr-[25px] flex flex-col items-center leading-[23px] text-[#e8edf5]"><span>8:37</span><span>26.07.2019</span></div>
        <div className="relative mr-[22px] h-[26px] w-[26px]">
          <svg width="20" height="20" viewBox="0 0 20 20" fill="#fff"><path d="M0 0h20v16H10l-3 3v-3H0z" /><path d="M3 4h14M3 8h14M3 12h10" stroke="#0a1f4b" /></svg>
          <div className="absolute bottom-[-2px] right-[-3px] flex h-[20px] w-[20px] items-center justify-center rounded-full border border-[#2a6fc9] bg-[#10294f] text-[13px] font-bold">9</div>
        </div>
      </div>
    </div>
  )
}

export default function App() {
  return (
    <div className="relative flex h-[1080px] w-[1920px] flex-col overflow-hidden bg-[#484848] font-['Open_Sans',sans-serif] text-[14px] leading-normal text-[#d0d0d0]">
      <div className="flex h-[29px] shrink-0 items-center bg-[#1a305f] text-[14.300px] text-[#e8ecf3]">
        <div className="ml-[2px] mr-[5px] flex h-[20px] w-[21px] items-end bg-[#1a305f]"><MiniMap className="h-[14px] w-[20px] bg-white" /></div>
        <div className="flex-1">*[Untitled]-2.0 (RGB colour 8-bit gamma integer, GIMP built-in sRGB, 1 layer) 12x7 – GIMP</div>
        <svg className="mr-[44px]" width="12" height="12" viewBox="0 0 12 12" stroke="#fff" fill="none"><path d="M0 6.500h12" /></svg>
        <svg className="mr-[47px]" width="12" height="12" viewBox="0 0 12 12" stroke="#fff" fill="none"><rect x=".5" y="2.500" width="9" height="9" /><path d="M3 2.500V.5h8.500v9H9.500" /></svg>
        <svg className="mr-[26px]" width="13" height="13" viewBox="0 0 13 13" stroke="#fff" fill="none"><path d="M.5.5l12 12M12.500.5l-12 12" /></svg>
      </div>
      <div className="flex h-[30px] shrink-0 items-center border-b border-[#3c3c3c] bg-[#484848] pl-[1px] text-[#d4d4d4]">
        {['File', 'Edit', 'Select', 'View'].map((m) => <div key={m} className="px-[6.600px]">{m}</div>)}
        <div className="-my-[2px] ml-[1px] flex h-[33px] items-center border-4 border-[#e31b23] bg-[#121212] px-[2px] text-white relative z-30">Image</div>
        {['Layer', 'Colours', 'Tools', 'Filters', 'Windows', 'Help'].map((m) => <div key={m} className="px-[6.600px]">{m}</div>)}
      </div>
      <div className="flex min-h-0 flex-1">
        <LeftDock />
        <Canvas />
        <RightDock />
      </div>
      <Taskbar />
      <ImageMenu />
      <ModeMenu />
      <Tip />
    </div>
  )
}
